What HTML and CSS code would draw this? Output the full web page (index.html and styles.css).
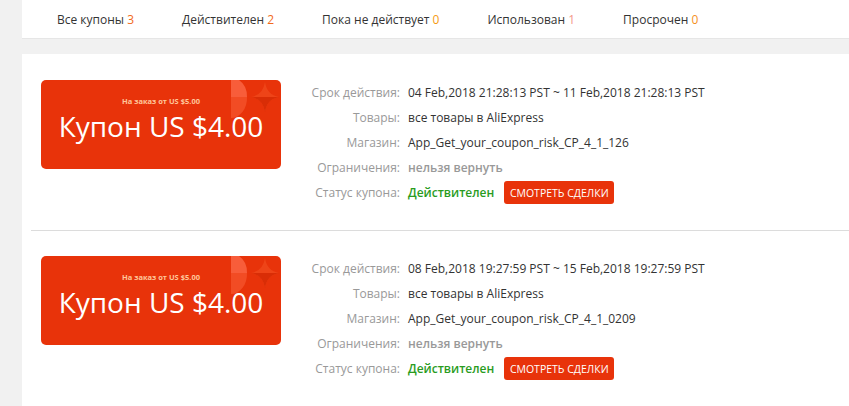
FILE: index.html
```html
<!DOCTYPE html>
<html lang="ru">
<head>
<meta charset="utf-8">
<title>Купоны</title>
<link rel="stylesheet" href="styles.css">
</head>
<body>
<div class="page">
  <div class="tabs">
    <span class="tab">Все купоны <b class="n n-all">3</b></span>
    <span class="tab">Действителен <b class="n n-valid">2</b></span>
    <span class="tab">Пока не действует <b class="n n-pending">0</b></span>
    <span class="tab">Использован <b class="n n-used">1</b></span>
    <span class="tab">Просрочен <b class="n n-expired">0</b></span>
  </div>
  <div class="list">
    <div class="item">
      <div class="coupon">
        <svg class="deco" width="52" height="40" viewBox="0 0 52 40">
          <path d="M2 0 H10 A16 19 0 0 1 18 17 H2 Z" fill="#f85d3a"/>
          <path d="M2 17 H18 A16 20 0 0 1 2 38 Z" fill="#f24c24"/>
          <path d="M36 2 Q38 15 50 17 Q38 19 36 32 Q34 19 22 17 Q34 15 36 2 Z" fill="#ee4418"/>
          <path d="M22 17 Q34 19 36 32 Q38 19 50 17 Z" fill="#d92d06"/>
        </svg>
        <div class="min">На заказ от US $5.00</div>
        <div class="amount">Купон US $4.00</div>
      </div>
      <div class="details">
        <div class="row"><span class="label">Срок действия:</span><span class="value">04 Feb,2018 21:28:13 PST ~ 11 Feb,2018 21:28:13 PST</span></div>
        <div class="row"><span class="label">Товары:</span><span class="value">все товары в AliExpress</span></div>
        <div class="row"><span class="label">Магазин:</span><span class="value">App_Get_your_coupon_risk_CP_4_1_126</span></div>
        <div class="row"><span class="label">Ограничения:</span><span class="value muted">нельзя вернуть</span></div>
        <div class="row"><span class="label">Статус купона:</span><span class="value ok">Действителен</span><a class="btn">СМОТРЕТЬ СДЕЛКИ</a></div>
      </div>
    </div>
    <div class="item">
      <div class="coupon">
        <svg class="deco" width="52" height="40" viewBox="0 0 52 40">
          <path d="M2 0 H10 A16 19 0 0 1 18 17 H2 Z" fill="#f85d3a"/>
          <path d="M2 17 H18 A16 20 0 0 1 2 38 Z" fill="#f24c24"/>
          <path d="M36 2 Q38 15 50 17 Q38 19 36 32 Q34 19 22 17 Q34 15 36 2 Z" fill="#ee4418"/>
          <path d="M22 17 Q34 19 36 32 Q38 19 50 17 Z" fill="#d92d06"/>
        </svg>
        <div class="min">На заказ от US $5.00</div>
        <div class="amount">Купон US $4.00</div>
      </div>
      <div class="details">
        <div class="row"><span class="label">Срок действия:</span><span class="value">08 Feb,2018 19:27:59 PST ~ 15 Feb,2018 19:27:59 PST</span></div>
        <div class="row"><span class="label">Товары:</span><span class="value">все товары в AliExpress</span></div>
        <div class="row"><span class="label">Магазин:</span><span class="value">App_Get_your_coupon_risk_CP_4_1_0209</span></div>
        <div class="row"><span class="label">Ограничения:</span><span class="value muted">нельзя вернуть</span></div>
        <div class="row"><span class="label">Статус купона:</span><span class="value ok">Действителен</span><a class="btn">СМОТРЕТЬ СДЕЛКИ</a></div>
      </div>
    </div>
  </div>
</div>
</body>
</html>
```
FILE: styles.css
```css
html, body {
  margin: 0;
  padding: 0;
}
body {
  background: #f1f1f1;
  font-family: "Open Sans", "Noto Sans", sans-serif;
  font-size: 12px;
  color: #333;
  overflow: hidden;
}
.page {
  padding-left: 22px;
  height: 100vh;
  display: flex;
  flex-direction: column;
}
.tabs {
  flex: none;
  background: #fff;
  height: 38px;
  border-bottom: 1px solid #e6e6e6;
  display: flex;
  align-items: center;
  gap: 48px;
  padding-left: 35px;
}
.tab {
  color: #333;
  white-space: nowrap;
}
.n {
  font-weight: normal;
}
.n-all, .n-valid { color: #f26a1b; }
.n-pending { color: #f59a12; }
.n-used { color: #f4998a; }
.n-expired { color: #f5901e; }

.list {
  flex: 1;
  min-height: 0;
  overflow: hidden;
  margin-top: 15px;
  background: #fff;
  padding-left: 9px;
}
.item {
  display: flex;
  align-items: flex-start;
  padding: 26px 0 25px 10px;
  border-bottom: 1px solid #dcdcdc;
}
.item + .item {
  padding-top: 25px;
}
.coupon {
  position: relative;
  flex: none;
  width: 240px;
  height: 89px;
  border-radius: 5px;
  background: #e8330a;
  color: #fff;
  text-align: center;
  overflow: hidden;
  margin-right: 19px;
}
.deco {
  position: absolute;
  right: 0;
  top: 0;
  display: block;
}
.min {
  position: relative;
  margin-top: 16px;
  font-size: 7.5px;
  font-weight: bold;
  color: #ffc69a;
  line-height: 10px;
}
.amount {
  position: relative;
  font-size: 28px;
  line-height: 38px;
  margin-top: 1px;
  color: #fff;
}
.details {
  display: flex;
  flex-direction: column;
}
.row {
  display: flex;
  align-items: center;
  height: 25px;
  white-space: nowrap;
}
.label {
  width: 100px;
  text-align: right;
  color: #999;
  margin-right: 8px;
}
.value {
  color: #333;
}
.value.muted {
  color: #999;
  font-weight: 600;
}
.value.ok {
  color: #2a9c1e;
  font-weight: 600;
}
.btn {
  margin-left: 10px;
  display: inline-flex;
  align-items: center;
  justify-content: center;
  width: 110px;
  height: 23px;
  border-radius: 3px;
  background: #e8330a;
  color: #fff;
  font-size: 10.5px;
  font-weight: 500;
  cursor: pointer;
}
```
